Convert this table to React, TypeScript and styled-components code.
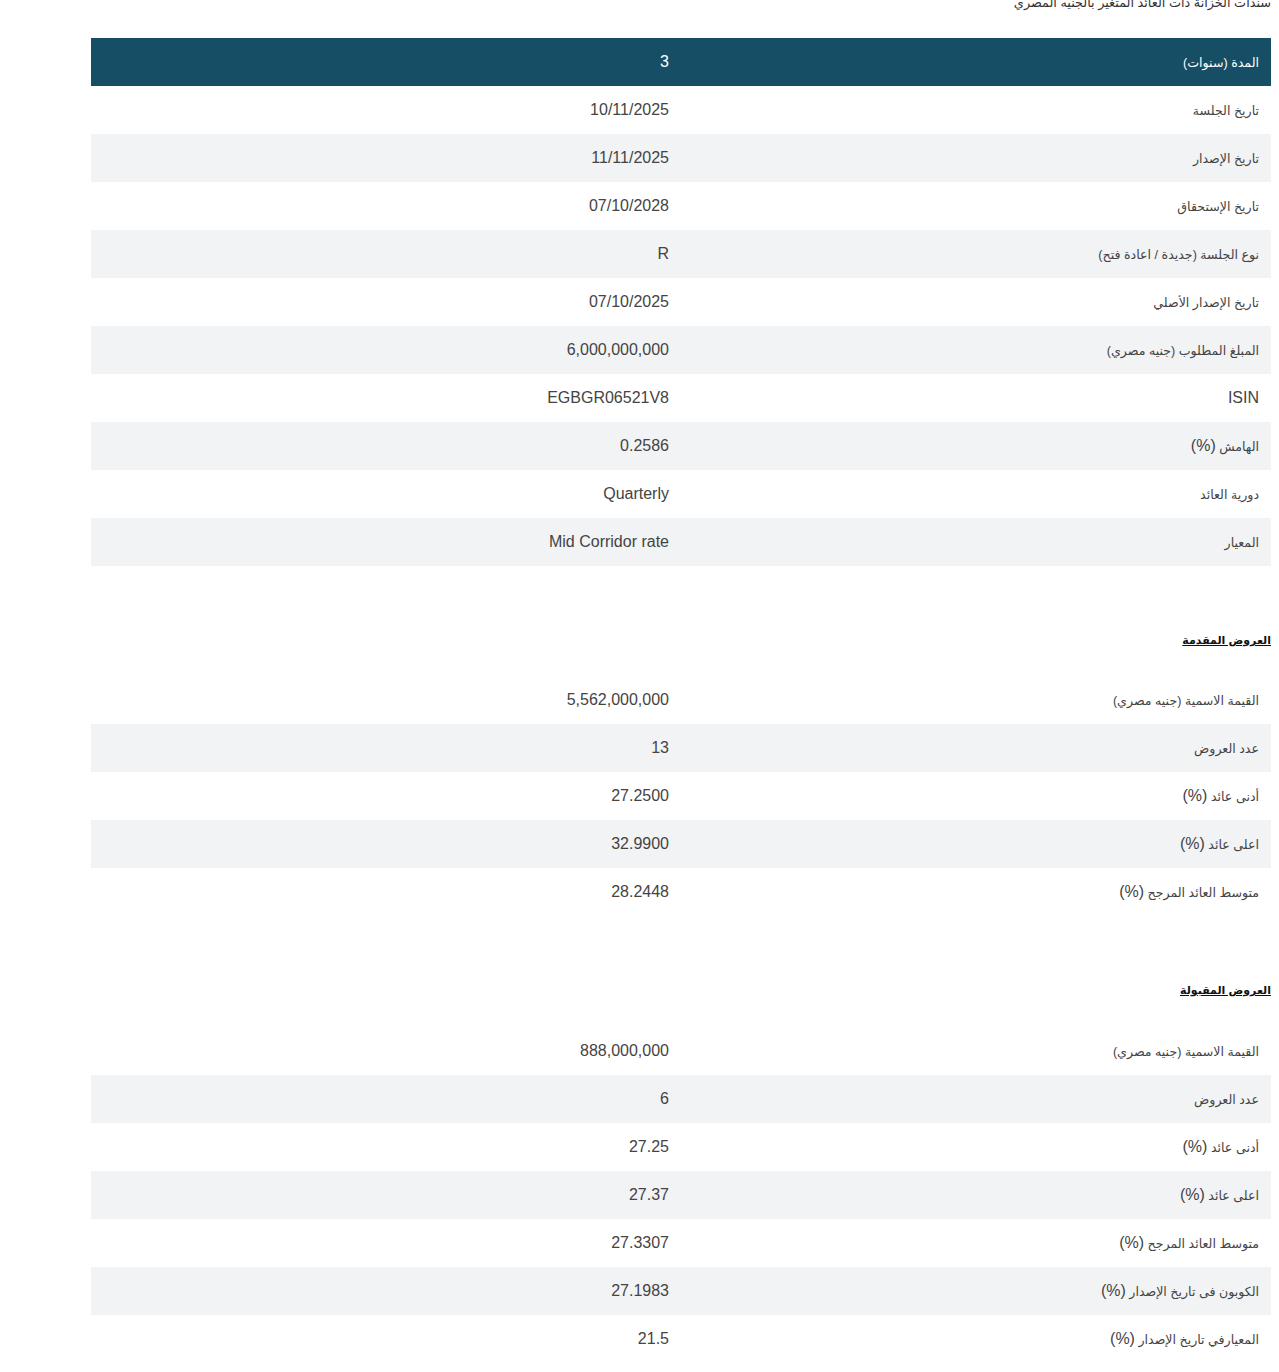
import React from "react";
import styled, { createGlobalStyle } from "styled-components";

const GlobalStyle = createGlobalStyle`
  body {
    margin: 0 8px;
    background: #fff;
    font-family: "Liberation Sans", "DejaVu Sans", Arial, sans-serif;
    color: #333;
  }
`;

const Page = styled.div`
  direction: rtl;
`;

const Title = styled.div`
  font-size: 12.8px;
  line-height: 20px;
  margin-top: -7px;
  margin-bottom: 25px;
  color: #333;
`;

const Table = styled.table`
  width: 1180px;
  border-collapse: collapse;
  table-layout: fixed;
`;

const Row = styled.tr<{ $head?: boolean; $shade?: boolean }>`
  height: 48px;
  background: ${({ $head, $shade }) =>
    $head ? "#164e66" : $shade ? "#f2f3f5" : "#fff"};
  color: ${({ $head }) => ($head ? "#fff" : "#444")};
`;

const Cell = styled.td`
  width: 50%;
  padding: 0 12px;
  font-size: 16px;
  text-align: right;
  vertical-align: middle;
`;

const Label = styled(Cell)<{ $latin?: boolean }>`
  font-size: ${({ $latin }) => ($latin ? "16px" : "12.6px")};
`;

const Pct = styled.span`
  font-size: 16px;
`;

const SectionHeading = styled.div<{ $top: number; $bottom: number }>`
  margin-top: ${({ $top }) => $top}px;
  margin-bottom: ${({ $bottom }) => $bottom}px;
  font-size: 11px;
  line-height: 20px;
  font-weight: bold;
  text-decoration: underline;
  color: #111;
`;

type Item = [string, string];

const main: Item[] = [
  ["المدة (سنوات)", "3"],
  ["تاريخ الجلسة", "10/11/2025"],
  ["تاريخ الإصدار", "11/11/2025"],
  ["تاريخ الإستحقاق", "07/10/2028"],
  ["نوع الجلسة (جديدة / اعادة فتح)", "R"],
  ["تاريخ الإصدار الأصلي", "07/10/2025"],
  ["المبلغ المطلوب (جنيه مصري)", "6,000,000,000"],
  ["ISIN", "EGBGR06521V8"],
  ["الهامش (%)", "0.2586"],
  ["دورية العائد", "Quarterly"],
  ["المعيار", "Mid Corridor rate"],
];

const offered: Item[] = [
  ["القيمة الاسمية (جنيه مصري)", "5,562,000,000"],
  ["عدد العروض", "13"],
  ["أدنى عائد (%)", "27.2500"],
  ["اعلى عائد (%)", "32.9900"],
  ["متوسط العائد المرجح (%)", "28.2448"],
];

const accepted: Item[] = [
  ["القيمة الاسمية (جنيه مصري)", "888,000,000"],
  ["عدد العروض", "6"],
  ["أدنى عائد (%)", "27.25"],
  ["اعلى عائد (%)", "27.37"],
  ["متوسط العائد المرجح (%)", "27.3307"],
  ["الكوبون فى تاريخ الإصدار (%)", "27.1983"],
  ["المعيارفي تاريخ الإصدار (%)", "21.5"],
];

const renderLabel = (label: string) => {
  if (label.endsWith(" (%)")) {
    return (
      <>
        {label.slice(0, -4)} <Pct>(%)</Pct>
      </>
    );
  }
  return label;
};

const DataTable = ({ items, head }: { items: Item[]; head?: boolean }) => (
  <Table>
    <tbody>
      {items.map(([label, value], i) => {
        const isHead = head && i === 0;
        const n = head ? i - 1 : i;
        return (
          <Row key={label} $head={isHead} $shade={!isHead && n % 2 === 1}>
            <Label $latin={/^[A-Z]+$/.test(label)}>{renderLabel(label)}</Label>
            <Cell>{value}</Cell>
          </Row>
        );
      })}
    </tbody>
  </Table>
);

const App = () => (
  <Page>
    <GlobalStyle />
    <Title>سندات الخزانة ذات العائد المتغير بالجنيه المصري</Title>
    <DataTable items={main} head />
    <SectionHeading $top={64} $bottom={26}>
      العروض المقدمة
    </SectionHeading>
    <DataTable items={offered} />
    <SectionHeading $top={64} $bottom={27}>
      العروض المقبولة
    </SectionHeading>
    <DataTable items={accepted} />
  </Page>
);

export default App;
